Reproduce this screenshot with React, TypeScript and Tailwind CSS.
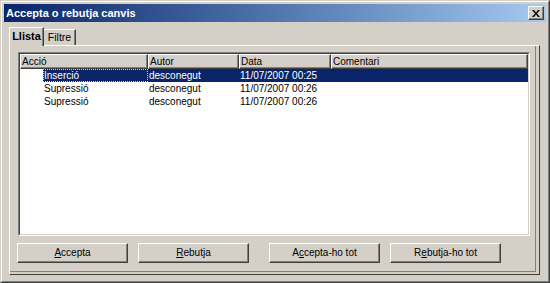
import React from "react";

const raised =
  "border border-t-white border-l-white border-r-[#404040] border-b-[#404040] shadow-[inset_-1px_-1px_0_#808080]";

function Btn({ children }: { children: React.ReactNode }) {
  return (
    <div
      className={`w-[111px] h-[20px] bg-[#d4d0c8] ${raised} flex items-center justify-center text-[10px] text-black leading-none`}
    >
      <span>{children}</span>
    </div>
  );
}

function HeaderCell({ w, label, grow }: { w?: string; label: string; grow?: boolean }) {
  return (
    <div
      className={`${grow ? "flex-1" : w} h-[15px] bg-[#d4d0c8] ${raised} flex items-center pl-[1px] text-[10px] leading-none text-black overflow-hidden whitespace-nowrap`}
    >
      {label}
    </div>
  );
}

const rows = [
  { a: "Inserció", b: "desconegut", c: "11/07/2007 00:25", sel: true },
  { a: "Supressió", b: "desconegut", c: "11/07/2007 00:26", sel: false },
  { a: "Supressió", b: "desconegut", c: "11/07/2007 00:26", sel: false },
];

export default function App() {
  return (
    <div className="w-[550px] h-[283px] bg-[#d4d0c8] font-['Liberation_Sans',Arial,sans-serif] border border-t-[#d4d0c8] border-l-[#d4d0c8] border-r-[#404040] border-b-[#404040] flex flex-col select-none">
      <div className="flex-1 border border-t-white border-l-white border-r-[#808080] border-b-[#808080] p-[2px] flex flex-col">
        {/* title bar */}
        <div className="h-[18px] bg-linear-to-r from-[#0a246a] to-[#a6caf0] flex items-center">
          <span className="pl-[2px] text-white font-bold text-[11px] leading-none">
            Accepta o rebutja canvis
          </span>
          <div
            className={`ml-auto mr-[2px] w-[16px] h-[14px] bg-[#d4d0c8] ${raised} flex items-center justify-center`}
          >
            <svg width="8" height="7" viewBox="0 0 8 7">
              <path d="M0 0h2l2 2.5L6 0h2L5 3.5 8 7H6L4 4.5 2 7H0l3-3.5z" fill="#000" />
            </svg>
          </div>
        </div>

        {/* tabs */}
        <div className="mt-[5px] ml-[5px] flex items-end h-[18px]">
          <div className="relative z-10 -mb-px w-[35px] h-[19px] bg-[#d4d0c8] border border-b-0 border-t-white border-l-white border-r-[#404040] shadow-[inset_-1px_0_0_#808080] flex items-start justify-center pt-[3px] text-[11px] font-bold leading-none text-black">
            Llista
          </div>
          <div className="w-[32px] h-[16px] bg-[#d4d0c8] border border-b-0 border-l-0 border-t-white border-r-[#404040] shadow-[inset_-1px_0_0_#808080] flex items-start justify-center pt-[2px] text-[10.5px] leading-none text-black">
            Filtre
          </div>
        </div>

        {/* panel */}
        <div className="ml-[5px] w-[531px] h-[230px] border border-t-white border-l-white border-r-[#404040] border-b-[#404040] pr-[3px] pb-[2px] flex flex-col">
          <div className="flex-1 border-r border-b border-r-[#808080] border-b-[#808080] flex flex-col">
            {/* list */}
            <div className="mt-[6px] ml-[8px] w-[512px] h-[184px] border border-t-[#808080] border-l-[#808080] border-r-white border-b-white">
              <div className="w-full h-full border border-t-[#404040] border-l-[#404040] border-r-[#d4d0c8] border-b-[#d4d0c8] bg-white flex flex-col">
                <div className="flex">
                  <HeaderCell w="w-[128px]" label="Acció" />
                  <HeaderCell w="w-[91px]" label="Autor" />
                  <HeaderCell w="w-[92px]" label="Data" />
                  <HeaderCell grow label="Comentari" />
                </div>
                {rows.map((r, i) => (
                  <div key={i} className="flex h-[13px] text-[10px] leading-[13px] whitespace-nowrap">
                    <div className="w-[23px]" />
                    <div
                      className={`flex-1 flex ${r.sel ? "bg-[#0a246a] text-white" : "text-black"}`}
                    >
                      <div
                        className={`w-[105px] pl-[1px] ${r.sel ? "outline outline-1 outline-dotted outline-[#d8d4c0] -outline-offset-1" : ""}`}
                      >
                        {r.a}
                      </div>
                      <div className="w-[91px] pl-[1px]">{r.b}</div>
                      <div className="w-[92px] pl-[1px]">{r.c}</div>
                      <div className="flex-1" />
                    </div>
                  </div>
                ))}
              </div>
            </div>

            {/* buttons */}
            <div className="mt-[7px] ml-[7px] flex">
              <Btn>
                <u>A</u>ccepta
              </Btn>
              <div className="w-[10px]" />
              <Btn>
                <u>R</u>ebutja
              </Btn>
              <div className="w-[20px]" />
              <Btn>
                A<u>c</u>cepta-ho tot
              </Btn>
              <div className="w-[10px]" />
              <Btn>
                R<u>e</u>butja-ho tot
              </Btn>
            </div>
          </div>
        </div>
      </div>
    </div>
  );
}
